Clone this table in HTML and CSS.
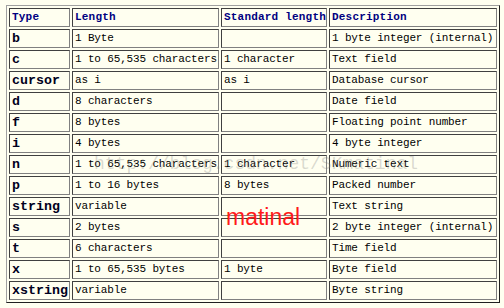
FILE: index.html
```html
<!DOCTYPE html>
<html lang="en">
<head>
  <meta charset="UTF-8" />
  <title>Data types</title>
  <link rel="stylesheet" href="styles.css">
</head>
<body>
  <table class="types">
    <tr>
      <th class="c-type">Type</th>
      <th class="c-len">Length</th>
      <th class="c-std">Standard length</th>
      <th class="c-desc">Description</th>
    </tr>
    <tr><td class="code">b</td><td>1 Byte</td><td></td><td>1 byte integer (internal)</td></tr>
    <tr><td class="code">c</td><td>1 to 65,535 characters</td><td>1 character</td><td>Text field</td></tr>
    <tr><td class="code">cursor</td><td>as i</td><td>as i</td><td>Database cursor</td></tr>
    <tr><td class="code">d</td><td>8 characters</td><td></td><td>Date field</td></tr>
    <tr><td class="code">f</td><td>8 bytes</td><td></td><td>Floating point number</td></tr>
    <tr><td class="code">i</td><td>4 bytes</td><td></td><td>4 byte integer</td></tr>
    <tr><td class="code">n</td><td>1 to 65,535 characters</td><td>1 character</td><td>Numeric text</td></tr>
    <tr><td class="code">p</td><td>1 to 16 bytes</td><td>8 bytes</td><td>Packed number</td></tr>
    <tr><td class="code">string</td><td>variable</td><td></td><td>Text string</td></tr>
    <tr><td class="code">s</td><td>2 bytes</td><td></td><td>2 byte integer (internal)</td></tr>
    <tr><td class="code">t</td><td>6 characters</td><td></td><td>Time field</td></tr>
    <tr><td class="code">x</td><td>1 to 65,535 bytes</td><td>1 byte</td><td>Byte field</td></tr>
    <tr><td class="code">xstring</td><td>variable</td><td></td><td>Byte string</td></tr>
  </table>

  <div class="watermark">http://blog.csdn.net/SKmatinal</div>
  <div class="stamp">matinal</div>
</body>
</html>
```

FILE: styles.css
```css
body {
  margin: 0;
  padding: 5px 0 0 6px;
  background-color: #fffff0;
  color: #000;
  font-family: 'Liberation Mono', 'DejaVu Sans Mono', monospace;
}

.types {
  table-layout: fixed;
  width: 494px;
  border-collapse: separate;
  border-spacing: 2px;
  border: 1px solid;
  border-color: #a0a0a0 #202020 #202020 #a0a0a0;
}

.types th,
.types td {
  box-sizing: border-box;
  height: 19px;
  padding: 2px 2px;
  border: 1px solid;
  border-color: #404040 #808080 #808080 #404040;
  font-size: 11px;
  letter-spacing: -0.15px;
  line-height: 13px;
  text-align: left;
  white-space: nowrap;
  overflow: hidden;
  vertical-align: middle;
}

.types th {
  color: #000080;
  font-weight: bold;
  letter-spacing: 0.2px;
}

.c-type { width: 61px; }
.c-len { width: 147px; }
.c-std { width: 106px; }
.c-desc { width: 168px; }

.types td.code {
  font-size: 13.3px;
  letter-spacing: 0;
  font-weight: bold;
  color: #000020;
}

.watermark {
  position: absolute;
  left: 94px;
  top: 152px;
  font-family: 'Liberation Mono', monospace;
  font-size: 18px;
  line-height: 24px;
  color: rgba(120, 120, 120, 0.28);
  white-space: nowrap;
}

.stamp {
  position: absolute;
  left: 226px;
  top: 204px;
  font-family: 'Liberation Sans', Arial, sans-serif;
  font-size: 23px;
  line-height: 26px;
  color: #ff1a1a;
}
```
